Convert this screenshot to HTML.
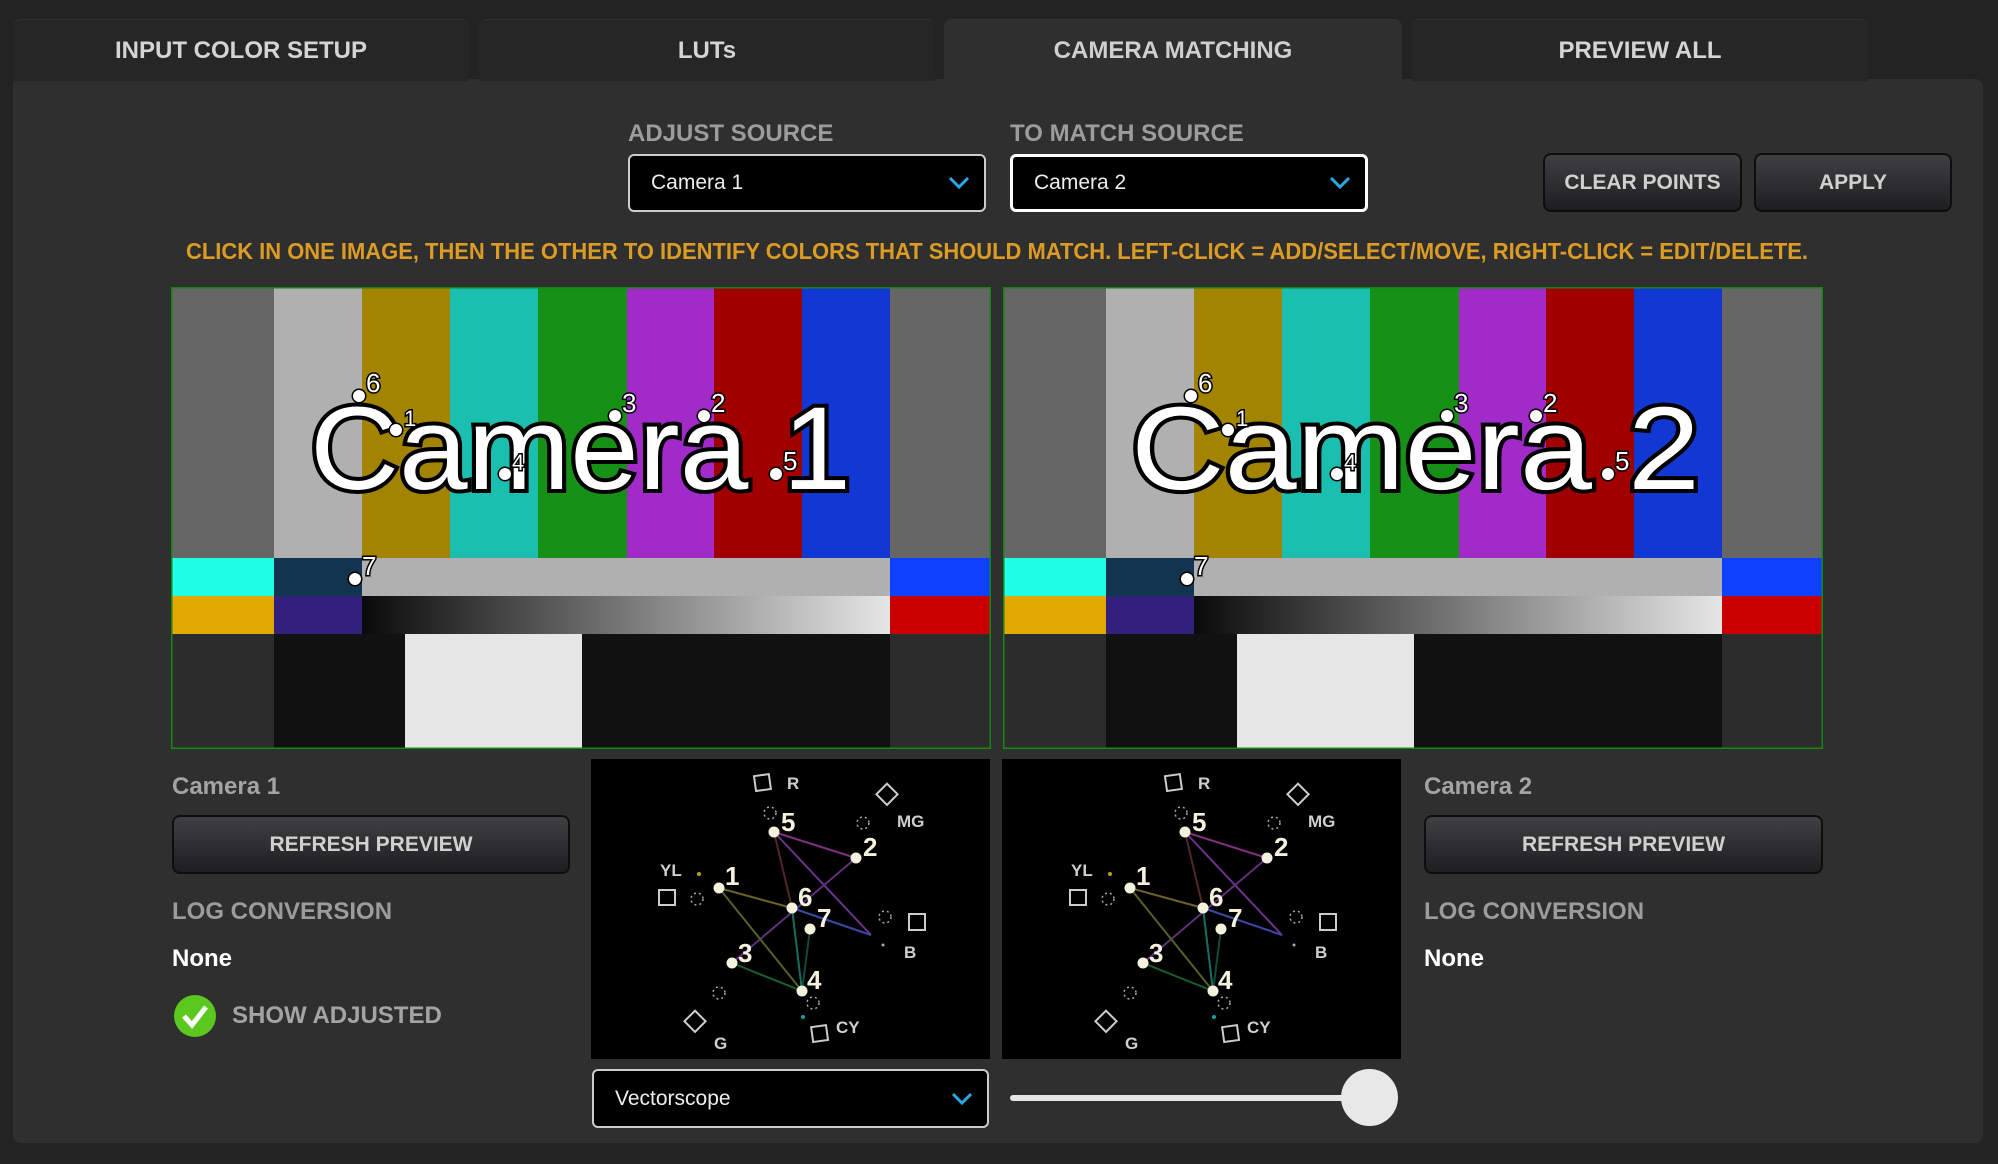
<!DOCTYPE html>
<html><head><meta charset="utf-8"><style>
*{margin:0;padding:0;box-sizing:border-box}
body{width:1998px;height:1164px;background:#232323;position:relative;overflow:hidden;font-family:"Liberation Sans",sans-serif;font-weight:bold}
.a{position:absolute}
.tab{position:absolute;top:19px;height:62px;background:#262626;border-radius:8px 8px 0 0;color:#d4d4d4;font-size:24px;text-align:center;line-height:62px;border-top:1px solid #333}
.panel{position:absolute;left:13px;top:79px;width:1970px;height:1064px;background:#2f2f2f;border-radius:0 8px 8px 8px}
.lbl{position:absolute;color:#9c9c9c;font-size:24px;white-space:nowrap}
.dd{position:absolute;background:#000;border:2px solid #ccc;border-radius:6px;color:#eee;font-size:21px;font-weight:normal;padding-left:21px}
.dd svg{position:absolute;right:14px;top:50%;margin-top:-7px}
.btn{position:absolute;background:linear-gradient(#404042,#1e1e20);border:2px solid #0e0e0e;border-radius:8px;color:#d0d0d0;font-size:21px;text-align:center}
</style></head><body>
<div class="panel"></div>
<div class="tab" style="left:13px;width:456px">INPUT COLOR SETUP</div>
<div class="tab" style="left:479px;width:456px">LUTs</div>
<div class="tab" style="left:944px;width:458px;height:63px;background:#2f2f2f;color:#cfcfcf">CAMERA MATCHING</div>
<div class="tab" style="left:1412px;width:456px">PREVIEW ALL</div>

<div class="lbl" style="left:628px;top:120px">ADJUST SOURCE</div>
<div class="lbl" style="left:1010px;top:120px">TO MATCH SOURCE</div>
<div class="dd" style="left:628px;top:154px;width:358px;height:58px;line-height:54px">Camera 1<svg width="22" height="14"><polyline points="2,2 11,11 20,2" fill="none" stroke="#2aa8e4" stroke-width="3"/></svg></div>
<div class="dd" style="left:1010px;top:154px;width:358px;height:58px;line-height:52px;border:3px solid #fff">Camera 2<svg width="22" height="14"><polyline points="2,2 11,11 20,2" fill="none" stroke="#2aa8e4" stroke-width="3"/></svg></div>
<div class="btn" style="left:1543px;top:153px;width:199px;height:59px;line-height:55px">CLEAR POINTS</div>
<div class="btn" style="left:1754px;top:153px;width:198px;height:59px;line-height:55px">APPLY</div>

<svg class="a" style="left:0;top:230px" width="1998" height="40"><text x="186" y="29" textLength="1622" lengthAdjust="spacingAndGlyphs" fill="#dc9c24" font-family="Liberation Sans" font-weight="bold" font-size="23">CLICK IN ONE IMAGE, THEN THE OTHER TO IDENTIFY COLORS THAT SHOULD MATCH. LEFT-CLICK = ADD/SELECT/MOVE, RIGHT-CLICK = EDIT/DELETE.</text></svg>

<svg width="0" height="0" style="position:absolute"><defs>
<linearGradient id="gr"><stop offset="0" stop-color="#0a0a0a"/><stop offset="1" stop-color="#e6e6e6"/></linearGradient>
<g id="bars">
<rect x="0" y="0" width="818" height="460" fill="#2c2c2c"/>
<rect x="0" y="0" width="102" height="270" fill="#666"/>
<rect x="102" y="0" width="88" height="270" fill="#b0b0b0"/>
<rect x="190" y="0" width="88" height="270" fill="#a38400"/>
<rect x="278" y="0" width="88" height="270" fill="#1bbfb0"/>
<rect x="366" y="0" width="89" height="270" fill="#169016"/>
<rect x="455" y="0" width="87" height="270" fill="#a22ac8"/>
<rect x="542" y="0" width="88" height="270" fill="#a00000"/>
<rect x="630" y="0" width="88" height="270" fill="#1238d4"/>
<rect x="718" y="0" width="100" height="270" fill="#666"/>
<rect x="0" y="270" width="102" height="38" fill="#1effe6"/>
<rect x="102" y="270" width="88" height="38" fill="#12344f"/>
<rect x="190" y="270" width="528" height="38" fill="#b0b0b0"/>
<rect x="718" y="270" width="100" height="38" fill="#1040ff"/>
<rect x="0" y="308" width="102" height="38" fill="#e0a800"/>
<rect x="102" y="308" width="88" height="38" fill="#33207d"/>
<rect x="190" y="308" width="528" height="38" fill="url(#gr)"/>
<rect x="718" y="308" width="100" height="38" fill="#c80000"/>
<rect x="102" y="346" width="616" height="114" fill="#111"/>
<rect x="233" y="346" width="177" height="114" fill="#e6e6e6"/>
</g>
<g id="pts" font-family="Liberation Sans" font-weight="normal" font-size="26" fill="#fff" stroke="#000" stroke-width="3" paint-order="stroke">
<circle cx="187" cy="108" r="6"/><text x="194" y="104">6</text>
<circle cx="224" cy="142" r="6"/><text x="232" y="138" font-size="22">1</text>
<circle cx="333" cy="186" r="6"/><text x="340" y="182" font-size="22">4</text>
<circle cx="443" cy="128" r="6"/><text x="450" y="124">3</text>
<circle cx="532" cy="128" r="6"/><text x="539" y="124">2</text>
<circle cx="604" cy="186" r="6"/><text x="611" y="182">5</text>
<circle cx="183" cy="291" r="6"/><text x="190" y="287">7</text>
</g>
<g id="scope" font-family="Liberation Sans" font-weight="bold">
<rect width="399" height="300" fill="#000"/>
<g stroke-width="2" fill="none" opacity="0.8">
<line x1="183" y1="73" x2="265" y2="99" stroke="#a03c9c"/>
<line x1="183" y1="73" x2="280" y2="176" stroke="#8a40b0"/>
<line x1="183" y1="73" x2="201" y2="149" stroke="#6a3030"/>
<line x1="265" y1="99" x2="141" y2="204" stroke="#7a3c9a"/>
<line x1="128" y1="129" x2="201" y2="149" stroke="#8a7a30"/>
<line x1="128" y1="129" x2="211" y2="232" stroke="#6a7a30"/>
<line x1="141" y1="204" x2="211" y2="232" stroke="#1a7a3a"/>
<line x1="201" y1="149" x2="211" y2="232" stroke="#1a8a7a"/>
<line x1="201" y1="149" x2="280" y2="176" stroke="#4a5ad0"/>
<line x1="219" y1="170" x2="211" y2="232" stroke="#1a5a4a"/>
</g>
<g fill="#f4f2dc">
<circle cx="183" cy="73" r="5.5"/><circle cx="265" cy="99" r="5.5"/><circle cx="128" cy="129" r="5.5"/><circle cx="201" cy="149" r="5.5"/><circle cx="219" cy="170" r="5.5"/><circle cx="141" cy="204" r="5.5"/><circle cx="211" cy="232" r="5.5"/>
</g>
<g fill="#f4f2dc" font-size="26">
<text x="190" y="72">5</text><text x="272" y="97">2</text><text x="134" y="126">1</text><text x="207" y="147">6</text><text x="226" y="168">7</text><text x="147" y="203">3</text><text x="216" y="230">4</text>
</g>
<g fill="none" stroke="#ccc" stroke-width="2">
<rect x="164" y="16" width="15" height="15" transform="rotate(-8 172 24)"/>
<rect x="288" y="28" width="15" height="15" transform="rotate(45 296 36)"/>
<rect x="68" y="131" width="16" height="15"/>
<rect x="318" y="155" width="16" height="16"/>
<rect x="96" y="255" width="15" height="15" transform="rotate(45 104 263)"/>
<rect x="221" y="267" width="15" height="15" transform="rotate(-8 229 274)"/>
</g>
<g fill="none" stroke="#aaa" stroke-width="1.5" stroke-dasharray="2 3">
<circle cx="179" cy="54" r="6"/><circle cx="272" cy="64" r="6"/><circle cx="106" cy="140" r="6"/><circle cx="294" cy="158" r="6"/><circle cx="128" cy="234" r="6"/><circle cx="222" cy="244" r="6"/>
</g>
<circle cx="108" cy="115" r="2" fill="#bba000"/><circle cx="212" cy="258" r="2" fill="#10a0a0"/><circle cx="292" cy="186" r="1.5" fill="#aaa"/>
<g fill="#cfcfcf" font-size="17">
<text x="196" y="30">R</text><text x="306" y="68">MG</text><text x="69" y="117">YL</text><text x="313" y="199">B</text><text x="123" y="290">G</text><text x="245" y="274">CY</text>
</g>
</g>
</defs></svg>

<svg class="a" style="left:171px;top:287px" width="820" height="462">
<g transform="translate(1,1)"><use href="#bars"/>
<text x="138" y="201" font-family="Liberation Sans" font-weight="normal" font-size="118" fill="#fff" stroke="#000" stroke-width="8" paint-order="stroke" textLength="541" lengthAdjust="spacingAndGlyphs">Camera 1</text>
<use href="#pts"/></g>
<rect x="0.75" y="0.75" width="818.5" height="460.5" fill="none" stroke="#108a10" stroke-width="1.5"/>
</svg>
<svg class="a" style="left:1003px;top:287px" width="820" height="462">
<g transform="translate(1,1)"><use href="#bars"/>
<text x="127" y="201" font-family="Liberation Sans" font-weight="normal" font-size="118" fill="#fff" stroke="#000" stroke-width="8" paint-order="stroke" textLength="569" lengthAdjust="spacingAndGlyphs">Camera 2</text>
<use href="#pts"/></g>
<rect x="0.75" y="0.75" width="818.5" height="460.5" fill="none" stroke="#108a10" stroke-width="1.5"/>
</svg>

<div class="lbl" style="left:172px;top:773px;font-size:24px;color:#a4a4a4">Camera 1</div>
<div class="btn" style="left:172px;top:815px;width:398px;height:59px;line-height:55px">REFRESH PREVIEW</div>
<div class="lbl" style="left:172px;top:898px">LOG CONVERSION</div>
<div class="lbl" style="left:172px;top:945px;color:#fff">None</div>
<svg class="a" style="left:173px;top:994px" width="44" height="44"><circle cx="22" cy="22" r="21" fill="#5ac81e"/><polyline points="11,22 19,31 33,13" fill="none" stroke="#fff" stroke-width="5"/></svg>
<div class="lbl" style="left:232px;top:1002px;color:#a4a4a4">SHOW ADJUSTED</div>

<svg class="a" style="left:591px;top:759px" width="399" height="300"><use href="#scope"/></svg>
<svg class="a" style="left:1002px;top:759px" width="399" height="300"><use href="#scope"/></svg>

<div class="dd" style="left:592px;top:1069px;width:397px;height:59px;line-height:55px">Vectorscope<svg width="22" height="14"><polyline points="2,2 11,11 20,2" fill="none" stroke="#2aa8e4" stroke-width="3"/></svg></div>
<div class="a" style="left:1010px;top:1095px;width:345px;height:6px;background:#e6e6e6;border-radius:3px"></div>
<div class="a" style="left:1341px;top:1069px;width:57px;height:57px;background:#e8e8e8;border-radius:50%"></div>

<div class="lbl" style="left:1424px;top:773px;color:#a4a4a4">Camera 2</div>
<div class="btn" style="left:1424px;top:815px;width:399px;height:59px;line-height:55px">REFRESH PREVIEW</div>
<div class="lbl" style="left:1424px;top:898px">LOG CONVERSION</div>
<div class="lbl" style="left:1424px;top:945px;color:#fff">None</div>
</body></html>
